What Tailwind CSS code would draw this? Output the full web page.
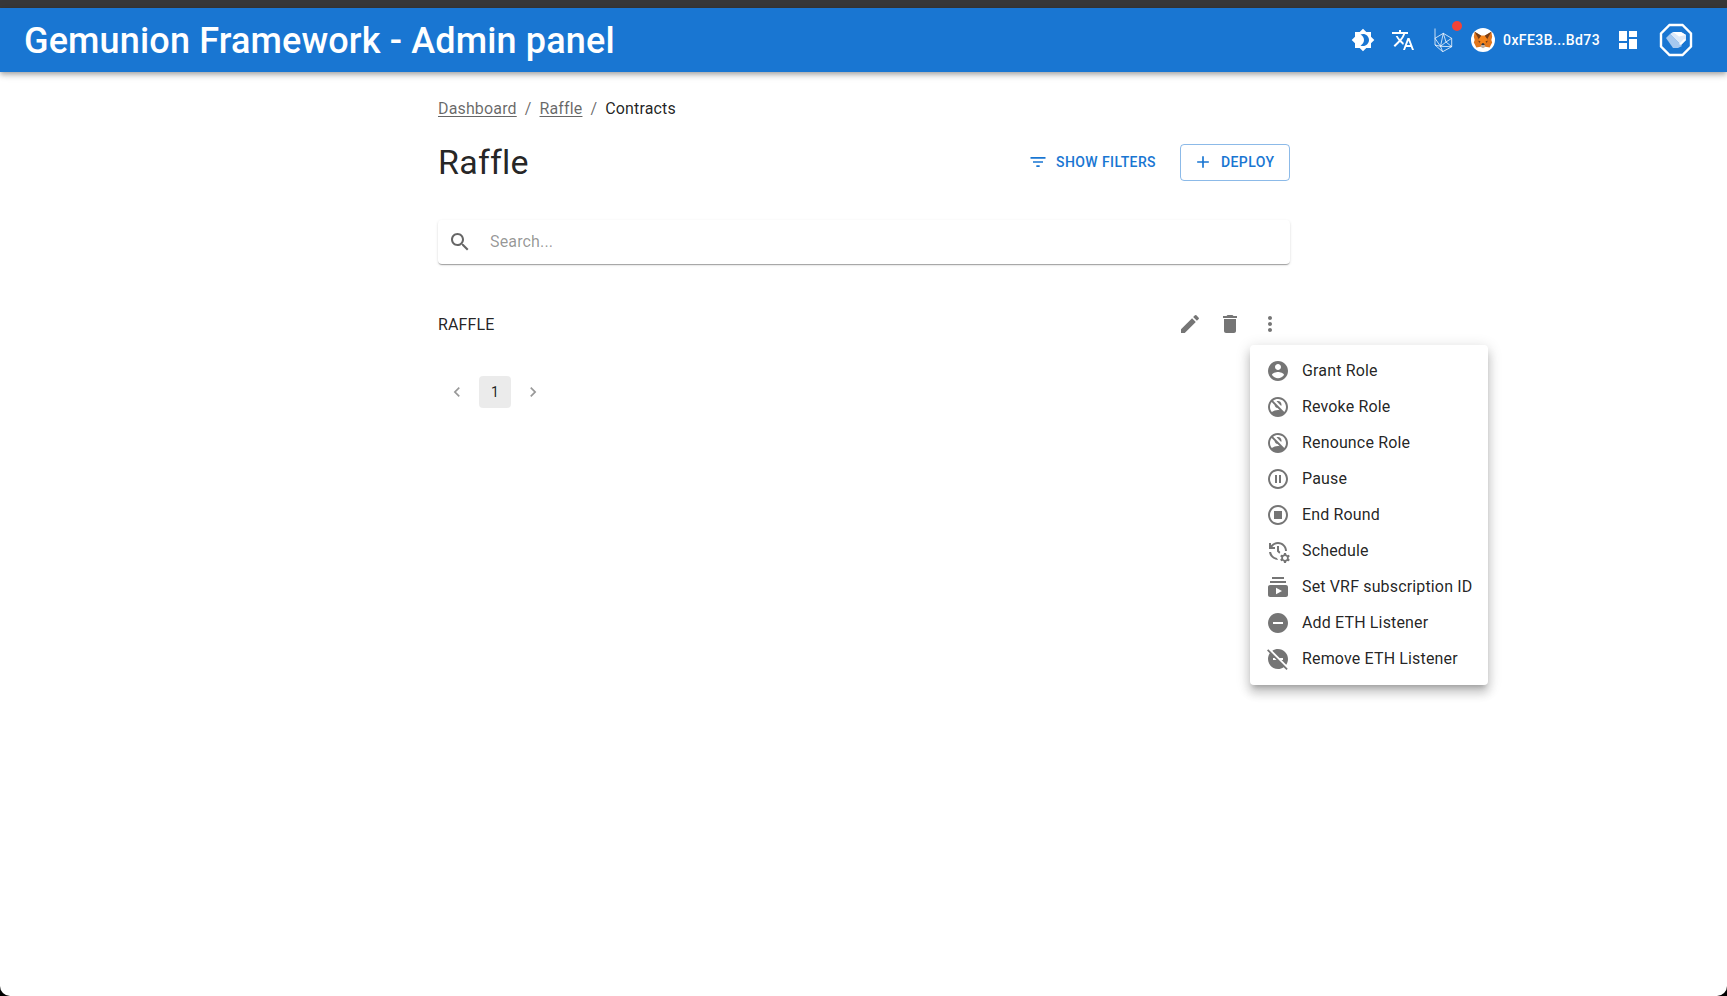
<!DOCTYPE html>
<html lang="en">
<head>
    <meta charset="UTF-8">
    <meta name="viewport" content="width=device-width, initial-scale=1.0">
    <title>Gemunion Framework - Admin panel</title>
    <script src="https://cdn.jsdelivr.net/npm/@tailwindcss/browser@4"></script>
</head>
<body class="bg-black font-['Roboto',sans-serif] text-black/87">
<div class="relative h-[996px] overflow-hidden rounded-b-[10px] bg-white">

    <!-- top bar -->
    <div class="h-2 bg-[#383838]"></div>
    <header class="flex h-16 items-center bg-[#1976d2] pl-6 pr-[31px] text-white shadow-[0_2px_4px_-1px_rgba(0,0,0,0.2),0_4px_5px_0_rgba(0,0,0,0.14),0_1px_10px_0_rgba(0,0,0,0.12)]">
        <h1 class="grow pt-[2px] text-[36px] font-medium leading-none tracking-[0.15px]">Gemunion Framework - Admin panel</h1>
        <button class="flex size-10 items-center justify-center">
            <svg class="size-6 fill-white" viewBox="0 0 24 24"><path d="M20 8.69V4h-4.69L12 .69 8.69 4H4v4.69L.69 12 4 15.31V20h4.69L12 23.31 15.31 20H20v-4.69L23.31 12 20 8.69zM12 18c-.89 0-1.74-.2-2.5-.55C11.56 16.5 13 14.42 13 12s-1.44-4.5-3.5-5.45C10.26 6.2 11.11 6 12 6c3.31 0 6 2.69 6 6s-2.69 6-6 6z"/></svg>
        </button>
        <button class="flex size-10 items-center justify-center">
            <svg class="size-6 fill-white" viewBox="0 0 24 24"><path d="M12.87 15.07l-2.54-2.51.03-.03c1.74-1.94 2.98-4.17 3.71-6.53H17V4h-7V2H8v2H1v1.99h11.17C11.5 7.92 10.44 9.75 9 11.35 8.07 10.32 7.3 9.19 6.69 8h-2c.73 1.63 1.73 3.17 2.98 4.56l-5.09 5.02L4 19l5-5 3.11 3.11.76-2.04zM18.5 10h-2L12 22h2l1.12-3h4.75L21 22h2l-4.5-12zm-2.62 7l1.62-4.33L19.12 17h-3.24z"/></svg>
        </button>
        <button class="relative flex size-10 items-center justify-center">
            <svg class="size-6 fill-none stroke-white/85 stroke-[0.9]" viewBox="0 0 24 24">
                <path d="M4 .5V17l7.700 6.700 9-5V10.300L12.300 5.300 4 10.300"/>
                <path d="M4 10.300l5.500 8 2.200 5.400M9.500 18.300l11.200.4M4 17l5.500 1.300M12.300 5.300L15 14l5.700-3.700M15 14l-5.500 4.300M15 14l5.700 4.700M12.300 5.300L9.500 18.300"/>
            </svg>
            <span class="absolute left-[29px] top-[1px] size-[10px] rounded-full bg-[#f44336]"></span>
        </button>
        <button class="ml-2 flex h-10 items-center text-sm font-medium tracking-[0.4px]">
            <span class="mr-2 flex size-6 items-center justify-center rounded-full bg-white">
                <svg class="size-5" viewBox="0 0 24 24">
                    <path fill="#e2761b" d="M2 2l8 5h4l8-5 1 6-1 4 1 3-3 6-5-1h-6l-5 1-3-6 1-3-1-4z"/>
                    <path fill="#763d16" d="M2 2l8 5-3 4zM22 2l-8 5 3 4z"/>
                    <path fill="#f6851b" d="M7 11l3-4h4l3 4-2 5H9z"/>
                    <path fill="#c0ad9e" d="M9 20l1-2h4l1 2-3 2z"/>
                    <path fill="#233447" d="M10 18l1-2h2l1 2z"/>
                    <path fill="#763d16" d="M6 13l3 .5-1 2zM18 13l-3 .5 1 2z"/>
                </svg>
            </span>
            0xFE3B...Bd73
        </button>
        <button class="ml-2 flex size-10 items-center justify-center">
            <svg class="size-6 fill-white" viewBox="0 0 24 24"><path d="M3 13h8V3H3v10zm0 8h8v-6H3v6zm10 0h8V11h-8v10zm0-18v6h8V3h-8z"/></svg>
        </button>
        <button class="ml-2 flex size-10 items-center justify-center">
            <svg class="size-9" viewBox="0 0 36 36">
                <path fill="none" stroke="#fff" stroke-width="2.400" d="M11.500 3h13L33 11.500v13L24.500 33h-13L3 24.500v-13z"/>
                <path fill="#a6c8ef" d="M8 16l4-4 12 12-4 2h-5z"/>
                <path fill="#dce9f9" d="M12 12l3-2h8l5 3 0 5-5 5z"/>
                <path fill="#fff" d="M23 10l5 3-7 1.500-6-4.500z"/>
                <path fill="#fff" d="M28 18l-5 5-2-1 5-5z"/>
            </svg>
        </button>
    </header>

    <main class="ml-[438px] w-[852px]">
        <nav class="mt-[25px] flex h-6 items-center tracking-[0.15px] text-black/60">
            <a href="#" class="underline underline-offset-2">Dashboard</a>
            <span class="mx-2">/</span>
            <a href="#" class="underline underline-offset-2">Raffle</a>
            <span class="mx-2">/</span>
            <span class="text-black/87">Contracts</span>
        </nav>

        <div class="mt-[23px] flex h-[37px] items-center">
            <h2 class="grow pb-[2px] text-[34px] leading-none tracking-[0.25px]">Raffle</h2>
            <button class="flex h-9 items-center gap-2 px-[9px] pb-[2px] text-sm font-medium uppercase tracking-[0.4px] text-[#1976d2]">
                <svg class="size-5 fill-current" viewBox="0 0 24 24"><path d="M10 18h4v-2h-4v2zM3 6v2h18V6H3zm3 7h12v-2H6v2z"/></svg>
                Show filters
            </button>
            <button class="ml-[15px] flex h-[37px] w-[110px] items-center gap-2 rounded border border-[#1976d2]/50 pb-[2px] pl-[12px] text-sm font-medium uppercase tracking-[0.4px] text-[#1976d2]">
                <svg class="size-5 fill-current" viewBox="0 0 24 24"><path d="M19 13h-6v6h-2v-6H5v-2h6V5h2v6h6v2z"/></svg>
                Deploy
            </button>
        </div>

        <div class="mt-[39px] flex h-[44px] items-center rounded pb-[1px] pl-[10px] shadow-[0_2px_1px_-1px_rgba(0,0,0,0.2),0_1px_1px_0_rgba(0,0,0,0.14),0_1px_3px_0_rgba(0,0,0,0.12)]">
            <svg class="size-6 fill-black/60" viewBox="0 0 24 24"><path d="M15.500 14h-.79l-.28-.27C15.410 12.590 16 11.110 16 9.500 16 5.910 13.090 3 9.500 3S3 5.910 3 9.500 5.910 16 9.500 16c1.610 0 3.090-.59 4.230-1.570l.27.280v.79l5 4.990L20.490 19l-4.990-5zm-6 0C7.010 14 5 11.990 5 9.500S7.010 5 9.500 5 14 7.010 14 9.500 11.990 14 9.500 14z"/></svg>
            <input class="ml-[18px] grow tracking-[0.15px] outline-none placeholder:text-black/42" placeholder="Search...">
        </div>

        <div class="mt-10 flex h-10 items-center">
            <span class="grow pt-[1px] tracking-[0.15px]">RAFFLE</span>
            <button class="flex size-10 items-center justify-center">
                <svg class="size-6 fill-black/54" viewBox="0 0 24 24"><path d="M3 17.250V21h3.750L17.810 9.940l-3.750-3.750L3 17.250zM20.710 7.040c.39-.39.39-1.020 0-1.410l-2.340-2.340a.9959.9959 0 0 0-1.410 0l-1.830 1.830 3.750 3.750 1.830-1.830z"/></svg>
            </button>
            <button class="flex size-10 items-center justify-center">
                <svg class="size-6 fill-black/54" viewBox="0 0 24 24"><path d="M6 19c0 1.100.9 2 2 2h8c1.100 0 2-.9 2-2V7H6v12zM19 4h-3.500l-1-1h-5l-1 1H5v2h14V4z"/></svg>
            </button>
            <button class="flex size-10 items-center justify-center">
                <svg class="size-6 fill-black/54" viewBox="0 0 24 24"><path d="M12 8c1.100 0 2-.9 2-2s-.9-2-2-2-2 .9-2 2 .9 2 2 2zm0 2c-1.100 0-2 .9-2 2s.9 2 2 2 2-.9 2-2-.9-2-2-2zm0 6c-1.100 0-2 .9-2 2s.9 2 2 2 2-.9 2-2-.9-2-2-2z"/></svg>
            </button>
        </div>

        <div class="mt-[32px] flex h-8 gap-[6px] pl-[3px] text-sm">
            <button class="flex size-8 items-center justify-center opacity-40">
                <svg class="size-5 fill-black" viewBox="0 0 24 24"><path d="M15.410 7.410 14 6l-6 6 6 6 1.410-1.410L10.830 12z"/></svg>
            </button>
            <button class="flex size-8 items-center justify-center rounded bg-black/8">1</button>
            <button class="flex size-8 items-center justify-center opacity-40">
                <svg class="size-5 fill-black" viewBox="0 0 24 24"><path d="M10 6 8.590 7.410 13.170 12l-4.580 4.590L10 18l6-6z"/></svg>
            </button>
        </div>
    </main>

    <!-- row actions menu -->
    <ul class="absolute left-[1250px] top-[345px] w-[238px] whitespace-nowrap rounded bg-white py-2 tracking-[0.15px] shadow-[0_5px_5px_-3px_rgba(0,0,0,0.2),0_8px_10px_1px_rgba(0,0,0,0.14),0_3px_14px_2px_rgba(0,0,0,0.12)]">
        <li class="flex h-9 items-center px-4">
            <svg class="mr-3 size-6 shrink-0 fill-black/54" viewBox="0 0 24 24"><path d="M12 2C6.480 2 2 6.480 2 12s4.480 10 10 10 10-4.480 10-10S17.520 2 12 2zm0 3c1.660 0 3 1.340 3 3s-1.340 3-3 3-3-1.340-3-3 1.340-3 3-3zm0 14.200c-2.500 0-4.710-1.280-6-3.220.03-1.990 4-3.080 6-3.080 1.990 0 5.970 1.090 6 3.080-1.290 1.940-3.500 3.220-6 3.220z"/></svg>
            Grant Role
        </li>
        <li class="flex h-9 items-center px-4">
            <svg class="mr-3 size-6 shrink-0 fill-black/54" viewBox="0 0 24 24"><path d="M15.180 10.940c.2-.44.32-.92.32-1.440C15.500 7.570 13.930 6 12 6c-.52 0-1 .12-1.440.32l4.620 4.620z"/><path d="M12 2C6.480 2 2 6.480 2 12s4.480 10 10 10 10-4.480 10-10S17.520 2 12 2zM4 12c0-1.850.63-3.550 1.690-4.900l2.860 2.860c.21 1.560 1.430 2.790 2.990 2.990l2.200 2.200C13.170 15.050 12.590 15 12 15c-2.320 0-4.450.8-6.140 2.120C4.700 15.730 4 13.950 4 12zm14.310 4.900L7.100 5.690C8.450 4.630 10.150 4 12 4c4.420 0 8 3.580 8 8 0 1.850-.63 3.540-1.690 4.900z"/></svg>
            Revoke Role
        </li>
        <li class="flex h-9 items-center px-4">
            <svg class="mr-3 size-6 shrink-0 fill-black/54" viewBox="0 0 24 24"><path d="M15.180 10.940c.2-.44.32-.92.32-1.440C15.500 7.570 13.930 6 12 6c-.52 0-1 .12-1.440.32l4.620 4.620z"/><path d="M12 2C6.480 2 2 6.480 2 12s4.480 10 10 10 10-4.480 10-10S17.520 2 12 2zM4 12c0-1.850.63-3.550 1.690-4.900l2.860 2.860c.21 1.560 1.430 2.790 2.990 2.990l2.200 2.200C13.170 15.050 12.590 15 12 15c-2.320 0-4.450.8-6.140 2.120C4.700 15.730 4 13.950 4 12zm14.310 4.900L7.100 5.690C8.450 4.630 10.150 4 12 4c4.420 0 8 3.580 8 8 0 1.850-.63 3.540-1.690 4.900z"/></svg>
            Renounce Role
        </li>
        <li class="flex h-9 items-center px-4">
            <svg class="mr-3 size-6 shrink-0 fill-black/54" viewBox="0 0 24 24"><path d="M9 16h2V8H9v8zm3-14C6.480 2 2 6.480 2 12s4.480 10 10 10 10-4.480 10-10S17.520 2 12 2zm0 18c-4.410 0-8-3.590-8-8s3.590-8 8-8 8 3.590 8 8-3.590 8-8 8zm1-4h2V8h-2v8z"/></svg>
            Pause
        </li>
        <li class="flex h-9 items-center px-4">
            <svg class="mr-3 size-6 shrink-0 fill-black/54" viewBox="0 0 24 24"><path d="M12 2C6.480 2 2 6.480 2 12s4.480 10 10 10 10-4.480 10-10S17.520 2 12 2zm0 18c-4.410 0-8-3.590-8-8s3.590-8 8-8 8 3.590 8 8-3.590 8-8 8zm4-4H8V8h8v8z"/></svg>
            End Round
        </li>
        <li class="flex h-9 items-center px-4">
            <svg class="mr-3 size-6 shrink-0 fill-black/54" viewBox="0 0 24 24"><path d="M22.690 18.370l1.140-1-1-1.730-1.450.49c-.32-.27-.68-.48-1.080-.63L20 14h-2l-.3 1.490c-.4.15-.76.36-1.080.63l-1.450-.49-1 1.730 1.140 1c-.08.5-.08.76 0 1.260l-1.140 1 1 1.730 1.450-.49c.32.27.68.48 1.080.63L18 24h2l.3-1.490c.4-.15.76-.36 1.080-.63l1.450.49 1-1.730-1.140-1c.08-.51.08-.77 0-1.270zM19 21c-1.100 0-2-.9-2-2s.9-2 2-2 2 .9 2 2-.9 2-2 2zM11 7v5.410l2.360 2.360 1.040-1.790-1.400-1.390V7h-2zm10 5c0-4.970-4.030-9-9-9-2.830 0-5.350 1.320-7 3.360V4H3v6h6V8H6.260C7.530 6.190 9.630 5 12 5c3.860 0 7 3.140 7 7h2zm-10.140 6.910c-2.990-.49-5.350-2.900-5.780-5.910H3.060c.5 4.500 4.310 8 8.940 8h.07l-1.210-2.090z"/></svg>
            Schedule
        </li>
        <li class="flex h-9 items-center px-4">
            <svg class="mr-3 size-6 shrink-0 fill-black/54" viewBox="0 0 24 24"><path d="M20 8H4V6h16v2zm-2-6H6v2h12V2zm4 10v8c0 1.100-.9 2-2 2H4c-1.100 0-2-.9-2-2v-8c0-1.100.9-2 2-2h16c1.100 0 2 .9 2 2zm-6 4l-6-3.270v6.530L16 16z"/></svg>
            Set VRF subscription ID
        </li>
        <li class="flex h-9 items-center px-4">
            <svg class="mr-3 size-6 shrink-0 fill-black/54" viewBox="0 0 24 24"><path d="M12 2C6.480 2 2 6.480 2 12s4.480 10 10 10 10-4.480 10-10S17.520 2 12 2zm5 11H7v-2h10v2z"/></svg>
            Add ETH Listener
        </li>
        <li class="flex h-9 items-center px-4">
            <svg class="mr-3 size-6 shrink-0 fill-black/54" viewBox="0 0 24 24"><path d="M17 11v2h-1.460l4.680 4.680C21.340 16.070 22 14.110 22 12c0-5.520-4.480-10-10-10-2.110 0-4.070.66-5.680 1.780L13.540 11H17zM2.270 2.270L1 3.540l2.780 2.780C2.660 7.930 2 9.890 2 12c0 5.520 4.480 10 10 10 2.110 0 4.070-.66 5.680-1.780L20.460 23l1.270-1.270L11 11 2.270 2.270zM7 13v-2h1.460l2 2H7z"/></svg>
            Remove ETH Listener
        </li>
    </ul>
</div>
</body>
</html>
